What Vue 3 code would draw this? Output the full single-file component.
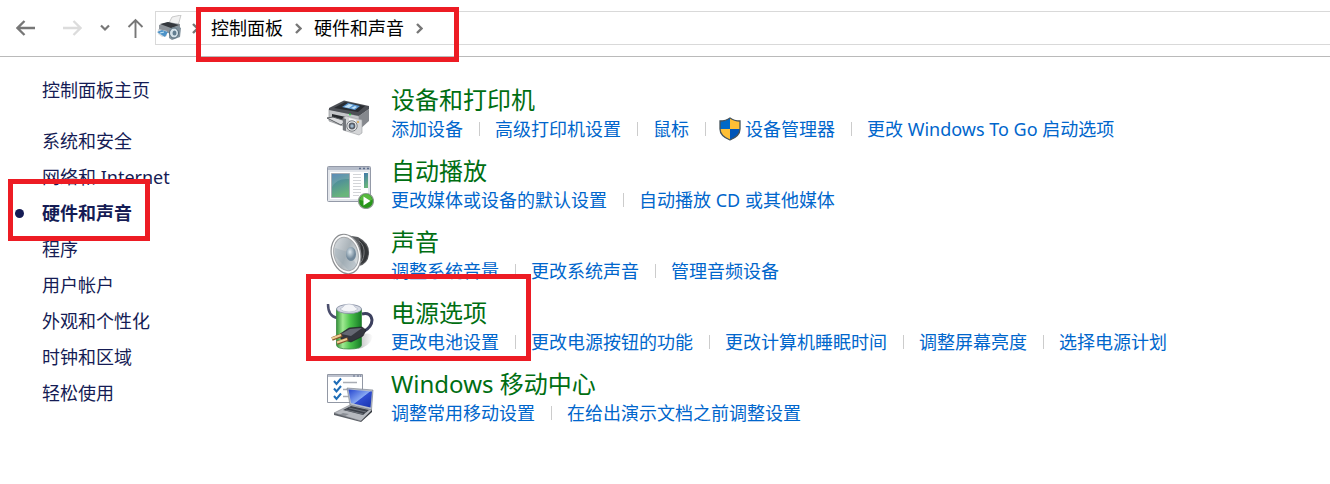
<script setup>
const crumbs = ['控制面板', '硬件和声音']

const sections = [
  { label: '系统和安全' },
  { label: '网络和 Internet' },
  { label: '硬件和声音', active: true },
  { label: '程序' },
  { label: '用户帐户' },
  { label: '外观和个性化' },
  { label: '时钟和区域' },
  { label: '轻松使用' },
]

const groups = [
  {
    icon: 'printer',
    title: '设备和打印机',
    links: [
      { label: '添加设备' },
      { label: '高级打印机设置' },
      { label: '鼠标' },
      { label: '设备管理器', shield: true },
      { label: '更改 Windows To Go 启动选项' },
    ],
  },
  {
    icon: 'autoplay',
    title: '自动播放',
    links: [{ label: '更改媒体或设备的默认设置' }, { label: '自动播放 CD 或其他媒体' }],
  },
  {
    icon: 'sound',
    title: '声音',
    links: [{ label: '调整系统音量' }, { label: '更改系统声音' }, { label: '管理音频设备' }],
  },
  {
    icon: 'power',
    title: '电源选项',
    marked: true,
    links: [
      { label: '更改电池设置' },
      { label: '更改电源按钮的功能' },
      { label: '更改计算机睡眠时间' },
      { label: '调整屏幕亮度' },
      { label: '选择电源计划' },
    ],
  },
  {
    icon: 'mobility',
    title: 'Windows 移动中心',
    links: [{ label: '调整常用移动设置' }, { label: '在给出演示文档之前调整设置' }],
  },
]
</script>

<template>
  <div class="window">
    <header class="toolbar">
      <button class="nav nav--wide" type="button" aria-label="后退">
        <svg width="20" height="18" viewBox="0 0 20 18">
          <path d="M1.5 9H19M8.5 2L1.5 9l7 7" fill="none" stroke="#777" stroke-width="2.3" />
        </svg>
      </button>
      <button class="nav nav--wide" type="button" aria-label="前进" disabled>
        <svg width="20" height="18" viewBox="0 0 20 18">
          <path d="M1 9h17.500M11.500 2l7 7-7 7" fill="none" stroke="#dcdcdc" stroke-width="2.3" />
        </svg>
      </button>
      <button class="nav nav--narrow" type="button" aria-label="最近浏览的位置">
        <svg width="10" height="8" viewBox="0 0 10 8">
          <path d="M1 1.500l4 4 4-4" fill="none" stroke="#777" stroke-width="2.2" />
        </svg>
      </button>
      <button class="nav nav--up" type="button" aria-label="上移">
        <svg width="18" height="20" viewBox="0 0 18 20">
          <path d="M9.500 20V2M2.500 9l7-7 7 7" fill="none" stroke="#777" stroke-width="1.900" />
        </svg>
      </button>

      <nav class="address" aria-label="地址">
        <svg class="address__icon" width="26" height="26" viewBox="0 0 26 26">
          <path d="M12 10L16 2l9-2-3 11z" fill="#f1f1f1" stroke="#b5b5b5" stroke-width=".7" />
          <path d="M3 10l9-3 12 2v6l-9 4-12-4z" fill="#8d9399" />
          <path d="M4 9l8-2 11 3-8 3z" fill="#34383d" />
          <path d="M2 14l9 2v5l-5 1-4-3z" fill="#d7dce0" />
          <path d="M1 17l5-2 6 2-3 5z" fill="#4d93c8" />
          <path d="M4 18l4-1" stroke="#c7e9fa" />
          <path d="M13 14l9-3 3 2-1 9-8 3-3-2z" fill="#81919c" />
          <ellipse cx="18" cy="18" rx="4.500" ry="5" fill="#d4e1e9" stroke="#536b7a" />
          <ellipse cx="18.500" cy="18" rx="2" ry="2.500" fill="#627e91" />
        </svg>
        <svg class="crumb-sep" width="7" height="11" viewBox="0 0 7 11">
          <path d="M1 1l4.500 4.500L1 10" fill="none" stroke="#777" stroke-width="2.400" />
        </svg>
        <div class="crumbs">
          <template v-for="crumb in crumbs" :key="crumb">
            <a href="#">{{ crumb }}</a>
            <svg class="crumb-sep" width="7" height="11" viewBox="0 0 7 11">
              <path d="M1 1l4.500 4.500L1 10" fill="none" stroke="#777" stroke-width="2.400" />
            </svg>
          </template>
          <span class="mark mark--crumbs"></span>
        </div>
      </nav>
    </header>

    <div class="body">
      <aside class="sidebar">
        <a class="home" href="#">控制面板主页</a>
        <ul>
          <li v-for="item in sections" :key="item.label" :class="{ active: item.active }">
            <a href="#">{{ item.label }}</a>
            <span v-if="item.active" class="mark mark--section"></span>
          </li>
        </ul>
      </aside>

      <main class="groups">
        <section v-for="group in groups" :key="group.title" class="group">
          <!-- 打印机和相机 -->
          <svg v-if="group.icon === 'printer'" class="group__icon" viewBox="0 0 48 48">
            <path d="M3 19l30 7v14L14 35 3 31z" fill="#c3c5c8" stroke="#83868a" stroke-width=".6" />
            <path d="M33 26l10-7v12l-10 9z" fill="#85888d" />
            <path d="M3 18L18 10.500l25 5.500v3l-10 7L3 20z" fill="#4d5056" />
            <path d="M8 18l11-6 20 4-7 6z" fill="#292c31" />
            <path d="M16 17l6-4 12 3-5 4z" fill="#5794d0" />
            <path d="M18 17l5-3 4 1-4 3zM25 18l4-2 2 1-3 2z" fill="#c4e2f4" />
            <path d="M6 24l14 3v7L6 30z" fill="#26292d" />
            <path d="M1 28l6-1 13 4-5 4z" fill="#dcdddf" stroke="#5b5e62" stroke-width="1" />
            <circle cx="24" cy="24.500" r="1" fill="#27d33c" />
            <path d="M17 28l3-2 16 4v13l-3 2-16-5z" fill="#d5d6d8" stroke="#9b9ea1" stroke-width=".6" />
            <path d="M17 28l3 1v12l-3-1z" fill="#73767b" />
            <path d="M23 28l7 2v2l-7-2z" fill="#f7f7f7" />
            <circle cx="26" cy="36" r="5.200" fill="#eceded" stroke="#777b80" />
            <circle cx="26" cy="36" r="3.400" fill="#595e68" />
            <circle cx="26" cy="36" r="1.700" fill="#a0b8cd" />
            <circle cx="32" cy="32" r="1" fill="#dba343" />
          </svg>

          <!-- 自动播放窗口 -->
          <svg v-else-if="group.icon === 'autoplay'" class="group__icon" viewBox="0 0 48 48">
            <defs>
              <linearGradient id="photo" x1="0" y1="0" x2=".3" y2="1">
                <stop offset="0" stop-color="#3f77ac" />
                <stop offset="1" stop-color="#69b57b" />
              </linearGradient>
            </defs>
            <rect x="1.500" y="5.500" width="43" height="35" rx="1" fill="#e3e6eb" stroke="#949aa8" />
            <path d="M2 6h42v3H2z" fill="#b6bdca" />
            <path d="M33 7.500h2M37 7.500h2M41 7.500h2" stroke="#5c6c8b" stroke-width="1.500" />
            <path d="M4 11h38v27H4z" fill="#fff" />
            <path d="M5.500 12.500h18v24h-18z" fill="url(#photo)" stroke="#a5acb3" />
            <path d="M6 26q5-9 17-8v-5H6z" fill="#fff" opacity=".14" />
            <path d="M27 13.500h8M27 16.500h8M27 19.500h8M27 22.500h8M27 25.500h8M27 28.500h8M27 31.500h8M27 34.500h6" stroke="#d3d5d8" />
            <path d="M38 12h4v15h-4z" fill="url(#photo)" />
            <circle cx="40" cy="40" r="7.500" fill="#27961a" stroke="#8d9992" stroke-width="1.200" />
            <path d="M34 39a6 6 0 0 1 12 0q-6 2-12 0z" fill="#70cc50" opacity=".65" />
            <path d="M37.500 35.500l7 4.500-7 4.500z" fill="#fff" />
          </svg>

          <!-- 扬声器 -->
          <svg v-else-if="group.icon === 'sound'" class="group__icon" viewBox="0 0 48 48">
            <defs>
              <linearGradient id="cone" x1="0" y1="0" x2="1" y2="1">
                <stop offset="0" stop-color="#dfe3e6" />
                <stop offset=".5" stop-color="#aab3b9" />
                <stop offset="1" stop-color="#eef1f2" />
              </linearGradient>
              <radialGradient id="dome" cx=".4" cy=".35">
                <stop offset="0" stop-color="#dce6ec" />
                <stop offset="1" stop-color="#71889a" />
              </radialGradient>
            </defs>
            <path d="M19 3l13 2q12 6 11 17-1 10-10 12l-9 4z" fill="#595b5e" />
            <path d="M33 7q10 6 9 15-1 9-8 10 3-12-1-25z" fill="#343638" />
            <path d="M33 9q6 5 5 13t-5 10" fill="none" stroke="#77797c" />
            <ellipse cx="20" cy="22" rx="14.500" ry="20" transform="rotate(-14 20 22)" fill="#fcfcfc" stroke="#8d8f92" stroke-width="1.200" />
            <ellipse cx="20" cy="22" rx="12" ry="17" transform="rotate(-14 20 22)" fill="url(#cone)" stroke="#a5a8ab" />
            <path d="M9 16l13 4 9 13q-4 6-9 5L9 24z" fill="#93a4af" opacity=".35" />
            <ellipse cx="25" cy="22" rx="5" ry="7" fill="url(#dome)" />
          </svg>

          <!-- 电池和插头 -->
          <svg v-else-if="group.icon === 'power'" class="group__icon" viewBox="0 0 48 48">
            <defs>
              <linearGradient id="cell" x1="0" y1="0" x2="1" y2="0">
                <stop offset="0" stop-color="#35933a" />
                <stop offset=".25" stop-color="#a0e992" />
                <stop offset=".55" stop-color="#4bc34b" />
                <stop offset="1" stop-color="#167b26" />
              </linearGradient>
              <linearGradient id="ground" x1="0" y1="0" x2="1" y2="0">
                <stop offset="0" stop-color="#888" />
                <stop offset="1" stop-color="#fff" />
              </linearGradient>
            </defs>
            <path d="M32 46l5-15q8-2 10 3-4 10-15 12z" fill="url(#ground)" opacity=".55" />
            <path d="M2 1q0 12 9 14" fill="none" stroke="#4b4f6d" stroke-width="2.500" />
            <path d="M10.500 6v36q0 4 12.500 4t12.500-4V6z" fill="url(#cell)" stroke="#398641" stroke-width=".8" />
            <ellipse cx="23" cy="6" rx="12.500" ry="4.500" fill="#d5d9e3" stroke="#818aa0" stroke-width=".8" />
            <path d="M14 6l3-2q1-3 6-3t6 3l3 2q-3 3-9 3t-9-3z" fill="#f4f5f8" stroke="#adb4c4" stroke-width=".6" />
            <path d="M36 11q9-2 10 6 0 7-9 12" fill="none" stroke="#3c405e" stroke-width="3" />
            <path d="M14 31l9-6 13-1 4 3-3 6-12 6-10-3z" fill="#34363e" stroke="#191b21" stroke-width=".6" />
            <path d="M15 31l9-5 12-1-11 8z" fill="#656873" />
            <path d="M6 36l10-4M11 40l11-4" stroke="#86592b" stroke-width="3.600" />
            <path d="M6 35.500l9-3.500M11 39.500l10-3.500" stroke="#f0cd94" stroke-width="1.900" />
          </svg>

          <!-- 清单和笔记本电脑 -->
          <svg v-else class="group__icon" viewBox="0 0 48 48">
            <defs>
              <linearGradient id="screen" x1="0" y1="0" x2="1" y2="1">
                <stop offset="0" stop-color="#2545ce" />
                <stop offset=".5" stop-color="#86a7f2" />
                <stop offset=".53" stop-color="#304ed2" />
                <stop offset="1" stop-color="#1732ac" />
              </linearGradient>
            </defs>
            <path d="M1.500.5h35v28h-35z" fill="#fff" stroke="#9298a5" />
            <path d="M2 1h34v2H2z" fill="#bdc2ce" />
            <path d="M27 2h2M31 2h2M34 2h1" stroke="#62708c" />
            <path d="M17 8.500h14M17 15.500h9M17 22.500h5" stroke="#a9adb5" stroke-width="1.500" />
            <path d="M8 7l2.500 3L15 4.500M8 14.500l2.500 3 4.500-5.500M8 22l2.500 3 4.500-5.500" fill="none" stroke="#1e6db7" stroke-width="2" />
            <path d="M21 14l26 2-1.500 20L24 31z" fill="#b7bec9" stroke="#737b88" stroke-width=".6" />
            <path d="M22.500 15.500L46 17.500l-1.500 16L25 29z" fill="url(#screen)" />
            <path d="M8 39l16-8 22 5-11 11z" fill="#b6b9bf" stroke="#777b82" stroke-width=".6" />
            <path d="M17 36l8-4 18 4-6 5z" fill="#3b4049" />
            <path d="M20 36l17 4M23 34l17 4" stroke="#8d929b" stroke-width=".6" />
            <path d="M17 39l6 1-4 2-6-1z" fill="#8a8e95" />
            <path d="M8 39v2l27 7v-1z" fill="#5d6168" />
            <path d="M35 47l11-11v2L35 48z" fill="#32363c" />
          </svg>

          <div class="group__text">
            <h2><a href="#">{{ group.title }}</a></h2>
            <ul class="links">
              <li v-for="link in group.links" :key="link.label" :class="{ 'has-shield': link.shield }">
                <a href="#">
                  <svg v-if="link.shield" class="shield" viewBox="0 0 22 24">
                    <path d="M11 1Q7 4 1 4v8q0 7 10 11z" fill="#0069c8" />
                    <path d="M11 1q4 3 10 3v8q0 7-10 11z" fill="#ffbf35" />
                    <path d="M1 12h10v11Q1 19 1 12z" fill="#ffbf35" />
                    <path d="M11 12h10q0 7-10 11z" fill="#0055b8" />
                    <path d="M11 1Q7 4 1 4v8q0 7 10 11 10-4 10-11V4q-6 0-10-3z" fill="none" stroke="#46535b" stroke-width="1.300" />
                  </svg>{{ link.label }}</a>
              </li>
            </ul>
          </div>
          <span v-if="group.marked" class="mark mark--group"></span>
        </section>
      </main>
    </div>
  </div>
</template>

<style>
body {
  background: #fff;
}
</style>

<style scoped>
.window {
  overflow: hidden;
  font-family: 'Noto Sans', 'Noto Sans CJK SC', sans-serif;
  font-size: 18px;
  line-height: 26px;
  white-space: nowrap;
  color: #000;
}

a {
  color: inherit;
  text-decoration: none;
}

ul {
  margin: 0;
  padding: 0;
  list-style: none;
}

svg {
  display: block;
  flex-shrink: 0;
}

.toolbar {
  display: flex;
  align-items: center;
  height: 56px;
  padding-left: 3px;
  border-bottom: 1px solid #bababa;
}

.nav {
  display: flex;
  align-items: center;
  justify-content: center;
  flex-shrink: 0;
  height: 34px;
  padding: 0;
  border: 0;
  background: none;
}

.nav--wide {
  width: 46px;
}

.nav--narrow {
  width: 20px;
}

.nav--up {
  width: 40px;
}

.address {
  display: flex;
  align-items: center;
  flex: 1;
  height: 32px;
  border: 1px solid #d9d9d9;
  border-right: 0;
}

.crumb-sep {
  margin: 0 12px;
}

.address__icon + .crumb-sep {
  margin: 0 12px 0 10px;
}

.crumbs {
  position: relative;
  display: flex;
  align-items: center;
}

/* 红色标注框 */
.mark {
  position: absolute;
  z-index: 1;
  box-sizing: border-box;
  border: 5px solid #ed1c24;
  pointer-events: none;
}

.mark--crumbs {
  inset: -8px -24px -21px -15px;
}

.body {
  display: flex;
}

.sidebar {
  flex: 0 0 284px;
  padding: 15px 0 0 42px;
  line-height: 36px;
  color: #151c55;
}

.home {
  display: block;
  margin-bottom: 15px;
}

.sidebar li {
  position: relative;
  width: 90px;
}

.active {
  font-weight: 700;
}

.active::before {
  content: '';
  position: absolute;
  top: 14px;
  left: -27px;
  width: 9px;
  height: 9px;
  border-radius: 50%;
  background: #151c55;
}

.mark--section {
  inset: -16px -18px -10px -34px;
}

.groups {
  flex: 1;
  padding-top: 27px;
}

.group {
  position: relative;
  display: flex;
  gap: 17px;
  margin-bottom: 13px;
}

.group__icon {
  width: 48px;
  height: 48px;
  margin-top: 6px;
}

h2 {
  margin: 0;
  font-size: 24px;
  font-weight: 400;
  line-height: 32px;
  color: #006e12;
}

.links {
  display: flex;
  color: #0066cc;
}

.links li {
  display: flex;
  align-items: center;
}

.links li + li::before {
  content: '';
  width: 1px;
  height: 14px;
  margin: 0 15px 0 16px;
  background: #ccc;
}

.links li.has-shield::before {
  margin-right: 13px;
}

.links a {
  display: flex;
  align-items: center;
}

.shield {
  width: 22px;
  height: 24px;
  margin-right: 4px;
}

.mark--group {
  top: -23px;
  left: -20px;
  width: 225px;
  height: 87px;
}
</style>
